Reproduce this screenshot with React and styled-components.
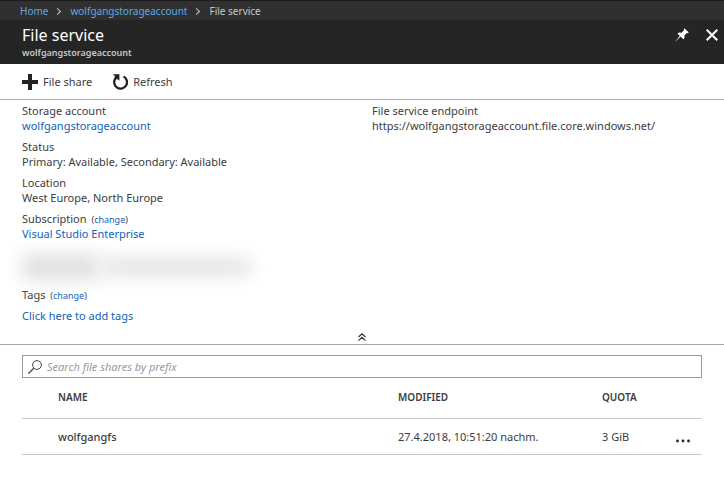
import React, {useState} from 'react'
import styled, {createGlobalStyle} from 'styled-components'

const files = [
    {name: 'wolfgangfs', modified: '27.4.2018, 10:51:20 nachm.', quota: '3 GiB'},
]

function App() {
    const [search, setSearch] = useState('');
    const [open, setOpen] = useState(true);
    const shown = files.filter(file => file.name.startsWith(search));

    return (
        <>
            <GlobalStyle />
            <Breadcrumb aria-label="Breadcrumb">
                <CrumbLink href="#home">Home</CrumbLink>
                <Separator />
                <CrumbLink href="#account">wolfgangstorageaccount</CrumbLink>
                <Separator />
                <span>File service</span>
            </Breadcrumb>
            <Header>
                <div>
                    <Title>File service</Title>
                    <Subtitle>wolfgangstorageaccount</Subtitle>
                </div>
                <HeaderActions>
                    <IconButton aria-label="Pin">
                        <svg width="14" height="14" viewBox="0 0 14 14" fill="#fff">
                            <path d="M9.4 0.2 L13.8 4.6 L12.6 5.2 L11.8 5 L9.4 7.6 L9.5 10 L8.3 11.2 L5.6 8.6 L0.6 13.6 L0.4 13.4 L4.8 7.8 L2.6 5.8 L3.8 4.6 L6.4 4.8 L9.1 2.2 L8.8 1 Z" />
                        </svg>
                    </IconButton>
                    <IconButton aria-label="Close">
                        <svg width="12" height="12" viewBox="0 0 12 12" stroke="#fff" strokeWidth="2" fill="none">
                            <path d="M0.7 0.7 L11.3 11.3 M11.3 0.7 L0.7 11.3" />
                        </svg>
                    </IconButton>
                </HeaderActions>
            </Header>
            <Toolbar>
                <ToolButton>
                    <svg width="16" height="16" viewBox="0 0 16 16" fill="#222">
                        <path d="M6 0h4v6h6v4h-6v6h-4v-6h-6v-4h6z" />
                    </svg>
                    File share
                </ToolButton>
                <ToolButton>
                    <svg width="16" height="16" viewBox="0 0 16 16">
                        <path d="M11.6 2.6 A6.4 6.4 0 1 1 3.8 4" fill="none" stroke="#222" strokeWidth="2.3" />
                        <path d="M0.8 0.2 H7.4 V6.8 L5.2 4.9 L3.6 5.4 L2.4 4 L3 2.2 Z" fill="#222" />
                    </svg>
                    Refresh
                </ToolButton>
            </Toolbar>
            <Essentials>
                {open && (
                    <Columns>
                        <Column>
                            <Item>
                                <dt>Storage account</dt>
                                <dd><Link href="#account">wolfgangstorageaccount</Link></dd>
                            </Item>
                            <Item>
                                <dt>Status</dt>
                                <dd>Primary: Available, Secondary: Available</dd>
                            </Item>
                            <Item>
                                <dt>Location</dt>
                                <dd>West Europe, North Europe</dd>
                            </Item>
                            <Item>
                                <dt>Subscription <Change>(<Link href="#subscription">change</Link>)</Change></dt>
                                <dd><Link href="#enterprise">Visual Studio Enterprise</Link></dd>
                            </Item>
                            <Redacted>
                                <Smudge $width={76} $height={26} />
                                <Smudge $width={148} $height={16} />
                            </Redacted>
                            <Item $spaced>
                                <dt>Tags <Change>(<Link href="#tags">change</Link>)</Change></dt>
                                <dd><Link href="#add-tags">Click here to add tags</Link></dd>
                            </Item>
                        </Column>
                        <Column>
                            <Item>
                                <dt>File service endpoint</dt>
                                <dd>https://wolfgangstorageaccount.file.core.windows.net/</dd>
                            </Item>
                        </Column>
                    </Columns>
                )}
                <Collapse aria-label="Toggle essentials" aria-expanded={open} onClick={() => setOpen(!open)}>
                    <svg width="8" height="8" viewBox="0 0 8 8" fill="none" stroke="#333" strokeWidth="1.2">
                        <path d="M0.5 4 L4 0.8 L7.5 4 M0.5 7.6 L4 4.4 L7.5 7.6" />
                    </svg>
                </Collapse>
            </Essentials>
            <Main>
                <SearchBox>
                    <svg width="14" height="14" viewBox="0 0 14 14" fill="none" stroke="#444">
                        <circle cx="9" cy="5" r="4.4" />
                        <path d="M5.8 8.2 L0.4 13.6" strokeWidth="1.3" />
                    </svg>
                    <SearchInput
                        aria-label="Search file shares by prefix"
                        placeholder="Search file shares by prefix"
                        value={search}
                        onChange={e => setSearch(e.target.value)}
                    />
                </SearchBox>
                <Table>
                    <colgroup>
                        <col />
                        <col width="30%" />
                        <col width="72" />
                        <col width="28" />
                    </colgroup>
                    <thead>
                        <tr>
                            <HeadCell>NAME</HeadCell>
                            <HeadCell>MODIFIED</HeadCell>
                            <HeadCell>QUOTA</HeadCell>
                            <HeadCell as="td" />
                        </tr>
                    </thead>
                    <tbody>
                        {shown.map(file => (
                            <tr key={file.name}>
                                <Cell $strong>{file.name}</Cell>
                                <Cell>{file.modified}</Cell>
                                <Cell>{file.quota}</Cell>
                                <Cell>
                                    <MoreButton aria-label="More">
                                        <svg width="18" height="4" viewBox="0 0 18 4" fill="#222">
                                            <circle cx="3.5" cy="2" r="1.4" />
                                            <circle cx="9" cy="2" r="1.4" />
                                            <circle cx="14.5" cy="2" r="1.4" />
                                        </svg>
                                    </MoreButton>
                                </Cell>
                            </tr>
                        ))}
                    </tbody>
                </Table>
            </Main>
        </>
    )
}

export default App

const GlobalStyle = createGlobalStyle`
    * {
        box-sizing: border-box;
    }

    body {
        margin: 0;
        background: #fff;
        color: #3c3c3c;
        font: 11px/15px "Noto Sans", "Open Sans", sans-serif;
    }

    button, input {
        font: inherit;
        color: inherit;
    }

    svg {
        display: block;
        flex: none;
    }
`

const Breadcrumb = styled.nav`
    display: flex;
    align-items: center;
    height: 20px;
    padding: 2px 20px 0;
    border-top: 1px solid #1c1c1c;
    background: #303030;
    color: #c8c8c8;
    font-size: 10px;
`

const CrumbLink = styled.a`
    color: #5ea9e0;
    text-decoration: none;
`

const Separator = styled.span`
    width: 5px;
    height: 5px;
    margin: 0 10px 0 7px;
    border: solid #c8c8c8;
    border-width: 1px 1px 0 0;
    transform: rotate(45deg);
`

const Header = styled.header`
    display: flex;
    justify-content: space-between;
    padding: 4px 6px 4px 22px;
    background: #252525;
    color: #fff;
`

const Title = styled.h1`
    margin: 0;
    font-size: 16px;
    font-weight: 400;
    line-height: 22px;
`

const Subtitle = styled.h2`
    margin: 0;
    color: #c8c8c8;
    font-size: 9px;
    font-weight: 600;
    line-height: 14px;
`

const HeaderActions = styled.div`
    display: flex;
    align-items: center;
    gap: 17px;
    height: 22px;
`

const IconButton = styled.button`
    padding: 0;
    border: 0;
    background: none;
    cursor: pointer;
`

const MoreButton = styled(IconButton)`
    display: block;
    padding-top: 10px;
`

const Toolbar = styled.div`
    display: flex;
    gap: 20px;
    height: 36px;
    padding: 0 22px;
    border-bottom: 1px solid #b4b4b4;
`

const ToolButton = styled.button`
    display: flex;
    align-items: center;
    gap: 5px;
    padding: 0;
    border: 0;
    background: none;
    cursor: pointer;
`

const Essentials = styled.section`
    padding: 3px 22px 0;
    border-bottom: 1px solid #a6a6a6;
`

const Columns = styled.div`
    display: grid;
    grid-template-columns: 1fr 1fr;
    column-gap: 20px;
`

const Column = styled.dl`
    margin: 0;
`

const Item = styled.div`
    margin-bottom: 6px;

    dd {
        margin: ${props => props.$spaced ? '6px' : '0'} 0 0;
    }
`

const Link = styled.a`
    color: #1062b8;
    text-decoration: none;
`

const Change = styled.small`
    margin-left: 2px;
    font-size: 9px;
    line-height: 1;
`

const Redacted = styled.div`
    display: flex;
    align-items: center;
    gap: 4px;
    height: 40px;
`

const Smudge = styled.span`
    width: ${props => props.$width}px;
    height: ${props => props.$height}px;
    background: #e0e0e0;
    filter: blur(9px);
`

const Collapse = styled.button`
    display: flex;
    justify-content: center;
    width: 100%;
    padding: 4px 0 3px;
    border: 0;
    background: none;
    cursor: pointer;
`

const Main = styled.main`
    padding: 10px 22px;
`

const SearchBox = styled.label`
    display: flex;
    align-items: center;
    gap: 5px;
    height: 23px;
    padding: 0 5px;
    border: 1px solid #999;
`

const SearchInput = styled.input`
    flex: 1;
    padding: 0;
    border: 0;
    outline: 0;
    background: none;

    &::placeholder {
        color: #999;
        font-style: italic;
        opacity: 1;
    }
`

const Table = styled.table`
    width: 100%;
    table-layout: fixed;
    border-collapse: collapse;
`

const HeadCell = styled.th`
    height: 40px;
    padding: 0;
    border-bottom: 1px solid #c8c8c8;
    font-size: 10px;
    font-weight: 600;
    text-align: left;

    &:first-child {
        padding-left: 36px;
    }
`

const Cell = styled.td`
    height: 36px;
    padding: 0;
    border-bottom: 1px solid #c8c8c8;
    font-weight: ${props => props.$strong ? 500 : 400};

    &:first-child {
        padding-left: 36px;
    }
`
